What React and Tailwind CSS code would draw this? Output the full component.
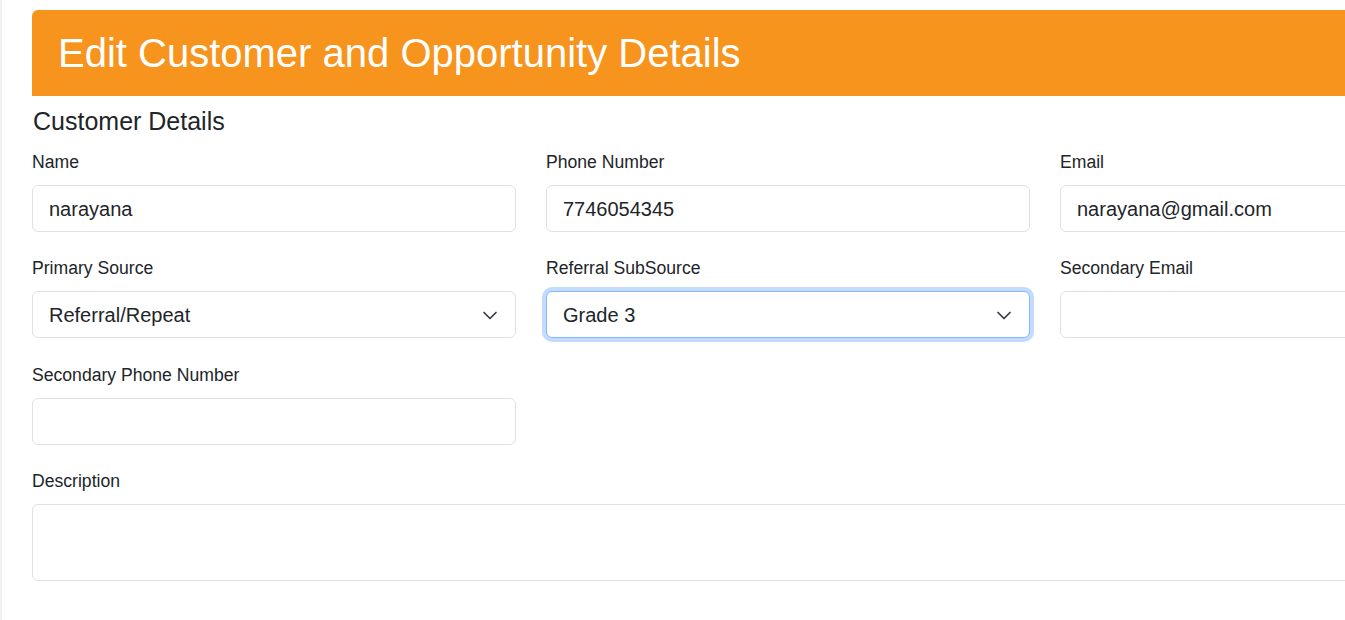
import React from "react";

const font = { fontFamily: '"Liberation Sans", Arial, sans-serif' };

function Chevron() {
  return (
    <svg width="16" height="12" viewBox="0 0 16 12" className="shrink-0" aria-hidden="true">
      <path d="M2 3.5 L8 9.5 L14 3.5" fill="none" stroke="#343a40" strokeWidth="1.7" strokeLinecap="round" strokeLinejoin="round" />
    </svg>
  );
}

function Field({ label, value, select, focused }) {
  return (
    <div className="flex flex-col mb-[24.4px]">
      <label className="text-[17.6px] leading-6 text-[#212529] mb-[11px]">{label}</label>
      <div
        className={
          "h-[47px] rounded-[6px] bg-white flex items-center pl-4 pr-[17px] text-[20px] text-[#212529] border " +
          (focused
            ? "border-[#86b7fe] shadow-[0_0_0_4px_rgba(13,110,253,0.25)]"
            : "border-[#dee2e6]")
        }
      >
        <span className="flex-1 truncate">{value}</span>
        {select && <Chevron />}
      </div>
    </div>
  );
}

export default function App() {
  return (
    <div className="w-[1345px] h-[620px] overflow-hidden bg-white flex" style={font}>
      <div className="w-[2px] bg-[#f1f1f1] shrink-0" />
      <div className="pl-[30px] pt-[10px] flex-1 min-w-0">
        <div className="w-[1600px] h-[86px] bg-[#f7941d] rounded-tl-[6px] flex items-center pl-[26px]">
          <h1 className="text-[40px] leading-none text-white">Edit Customer and Opportunity Details</h1>
        </div>
        <h2 className="text-[25px] leading-[29px] text-[#212529] mt-[11px] mb-[14px] pl-[1px]">Customer Details</h2>
        <div className="grid grid-cols-[484px_484px_484px] gap-x-[30px] w-[1512px]">
          <Field label="Name" value="narayana" />
          <Field label="Phone Number" value="7746054345" />
          <Field label="Email" value="narayana@gmail.com" />
          <Field label="Primary Source" value="Referral/Repeat" select />
          <Field label="Referral SubSource" value="Grade 3" select focused />
          <Field label="Secondary Email" value="" />
          <Field label="Secondary Phone Number" value="" />
          <div />
          <div />
          <div className="col-span-3 flex flex-col">
            <label className="text-[17.6px] leading-6 text-[#212529] mb-[10.5px]">Description</label>
            <div className="h-[77px] rounded-[6px] border border-[#dee2e6] bg-white" />
          </div>
        </div>
      </div>
    </div>
  );
}
